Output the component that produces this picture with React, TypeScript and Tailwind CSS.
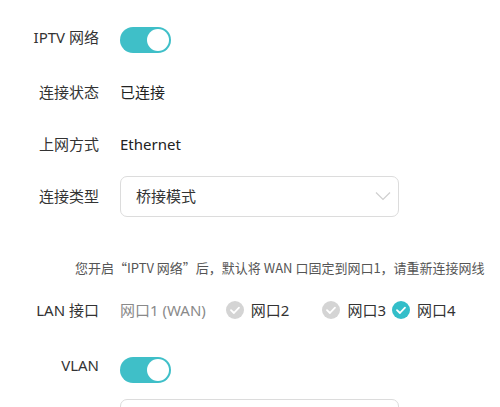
import React from 'react';

const font = { fontFamily: '"Noto Sans", "Noto Sans CJK SC", sans-serif' };

const Toggle: React.FC<{ className?: string }> = ({ className = '' }) => (
  <div className={`relative h-[26px] w-[51px] rounded-full bg-[#3fbfc8] ${className}`}>
    <div className="absolute right-[2px] top-[2px] h-[22px] w-[22px] rounded-full bg-white" />
  </div>
);

const Check: React.FC<{ on?: boolean }> = ({ on = false }) => (
  <svg width="18" height="18" viewBox="0 0 18 18" className="shrink-0">
    <circle cx="9" cy="9" r="9" fill={on ? '#33bec9' : '#d4d4d4'} />
    <path d="M5 9.2 L7.9 12 L13 6.6" fill="none" stroke="#fff" strokeWidth="1.8" strokeLinecap="round" strokeLinejoin="round" />
  </svg>
);

const Label: React.FC<{ children: React.ReactNode; className?: string }> = ({ children, className = '' }) => (
  <div className={`w-[99px] shrink-0 text-right text-[15px] leading-[20px] text-[#333] ${className}`}>{children}</div>
);

export default function App() {
  return (
    <div className="h-[407px] w-[500px] overflow-hidden bg-white" style={font}>
      <div className="flex flex-col pt-[14px]">
        {/* IPTV */}
        <div className="flex h-[52px] items-start gap-[21px]">
          <Label className="mt-[13px]">IPTV 网络</Label>
          <Toggle className="mt-[13px]" />
        </div>

        <div className="flex h-[52px] items-center gap-[21px]">
          <Label>连接状态</Label>
          <span className="text-[15px] leading-[20px] text-[#222]">已连接</span>
        </div>

        <div className="flex h-[52px] items-center gap-[21px]">
          <Label>上网方式</Label>
          <span className="text-[15px] leading-[20px] text-[#222]">Ethernet</span>
        </div>

        <div className="flex h-[52px] items-center gap-[21px]">
          <Label>连接类型</Label>
          <div className="flex h-[41px] w-[279px] items-center justify-between rounded-[7px] border border-[#dcdcdc] pl-[15px] pr-[7px]">
            <span className="text-[15px] leading-[20px] text-[#333]">桥接模式</span>
            <svg width="16" height="10" viewBox="0 0 16 10">
              <path d="M1 1.5 L8 8.5 L15 1.5" fill="none" stroke="#cfcfcf" strokeWidth="1.2" />
            </svg>
          </div>
        </div>

        {/* note */}
        <div
          className="mt-[36px] pl-[75px] text-[13px] leading-[20px] text-[#555]"
          style={{ fontFamily: '"Noto Sans CJK SC", "Noto Sans", sans-serif' }}
        >
          您开启“IPTV 网络”后，默认将 WAN 口固定到网口1，请重新连接网线
        </div>

        {/* LAN */}
        <div className="mt-[16px] flex h-[32px] items-center gap-[21px]">
          <Label>LAN 接口</Label>
          <div className="flex items-center text-[15px] leading-[20px]">
            <span className="text-[#8a8a8a]">网口1 (WAN)</span>
            <div className="ml-[20px] flex items-center gap-[7px]">
              <Check />
              <span className="text-[#333]">网口2</span>
            </div>
            <div className="ml-[33px] flex items-center gap-[7px]">
              <Check />
              <span className="text-[#333]">网口3</span>
            </div>
            <div className="ml-[6px] flex items-center gap-[7px]">
              <Check on />
              <span className="text-[#333]">网口4</span>
            </div>
          </div>
        </div>

        {/* VLAN */}
        <div className="mt-[29px] flex items-start gap-[21px]">
          <Label>VLAN</Label>
          <Toggle className="mt-[2px]" />
        </div>

        <div className="mt-[16px] pl-[120px]">
          <div className="h-[41px] w-[279px] rounded-[7px] border border-[#dcdcdc]" />
        </div>
      </div>
    </div>
  );
}
